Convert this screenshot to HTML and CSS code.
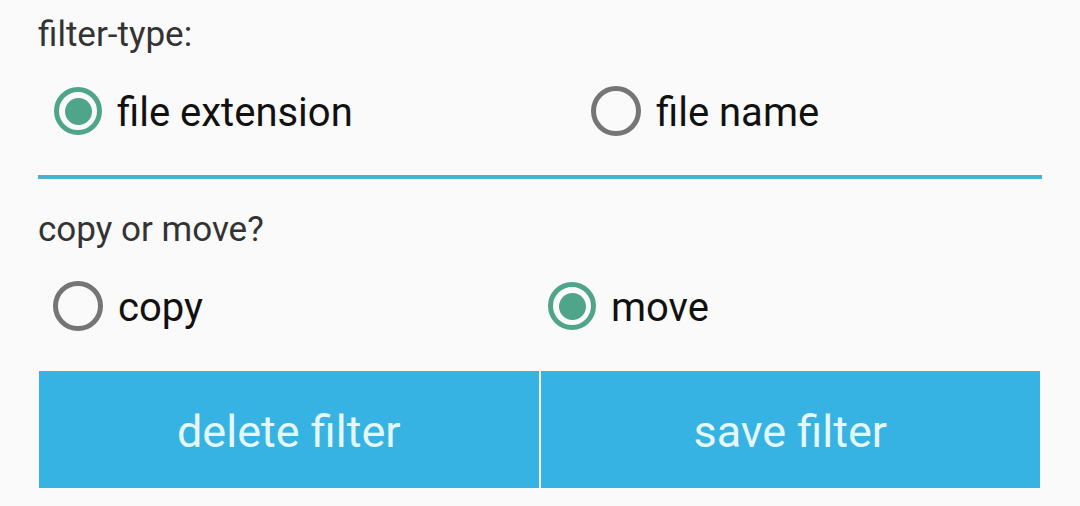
FILE: index.html
```html
<!DOCTYPE html>
<html>
<head>
<meta charset="utf-8">
<link rel="stylesheet" href="styles.css">
</head>
<body>
<div class="page">
  <div class="label label-first">filter-type:</div>
  <div class="row row-one">
    <div class="opt opt-a1"><span class="radio checked"></span><span class="opt-text">file extension</span></div>
    <div class="opt"><span class="radio"></span><span class="opt-text">file name</span></div>
  </div>
  <div class="divider"></div>
  <div class="label label-second">copy or move?</div>
  <div class="row row-two">
    <div class="opt opt-a2"><span class="radio"></span><span class="opt-text">copy</span></div>
    <div class="opt"><span class="radio checked"></span><span class="opt-text">move</span></div>
  </div>
  <div class="buttons">
    <div class="btn">delete filter</div>
    <div class="btn">save filter</div>
  </div>
</div>
</body>
</html>
```

FILE: styles.css
```css
html, body {
  margin: 0;
  padding: 0;
  background: #fafafa;
}
.page {
  width: 1004px;
  margin-left: 38px;
  font-family: Roboto, "Noto Sans", sans-serif;
}
.label {
  font-size: 35px;
  line-height: 40px;
  color: #333;
}
.label-first { padding-top: 15px; }
.label-second { margin-top: 31px; }
.row {
  display: flex;
  align-items: center;
  height: 70px;
  padding-left: 15px;
}
.row-one { margin-top: 21px; }
.row-two { margin-top: 21px; }
.opt {
  display: flex;
  align-items: center;
}
.opt-a1 { width: 538px; }
.opt-a2 { width: 494px; }
.radio {
  box-sizing: border-box;
  width: 50px;
  height: 50px;
  border-radius: 50%;
  border: 5px solid #757575;
  display: flex;
  align-items: center;
  justify-content: center;
  flex: none;
}
.radio.checked {
  width: 48px;
  height: 48px;
  margin: 0 1px;
  border-color: #4ea58a;
}
.radio.checked::after {
  content: "";
  width: 27px;
  height: 27px;
  border-radius: 50%;
  background: #4ea58a;
}
.opt-text {
  margin-left: 15px;
  padding-top: 2px;
  font-size: 40px;
  color: #111;
}
.radio.checked + .opt-text { margin-left: 14px; }
.divider {
  margin-top: 29px;
  height: 4px;
  background: #48b2d6;
}
.buttons {
  display: flex;
  gap: 2px;
  margin-top: 30px;
  margin-left: 1px;
  width: 1001px;
}
.btn {
  flex: 1;
  height: 117px;
  padding-top: 3px;
  box-sizing: border-box;
  background: #36b3e2;
  color: #e4f8fb;
  font-size: 45px;
  display: flex;
  align-items: center;
  justify-content: center;
}
```
